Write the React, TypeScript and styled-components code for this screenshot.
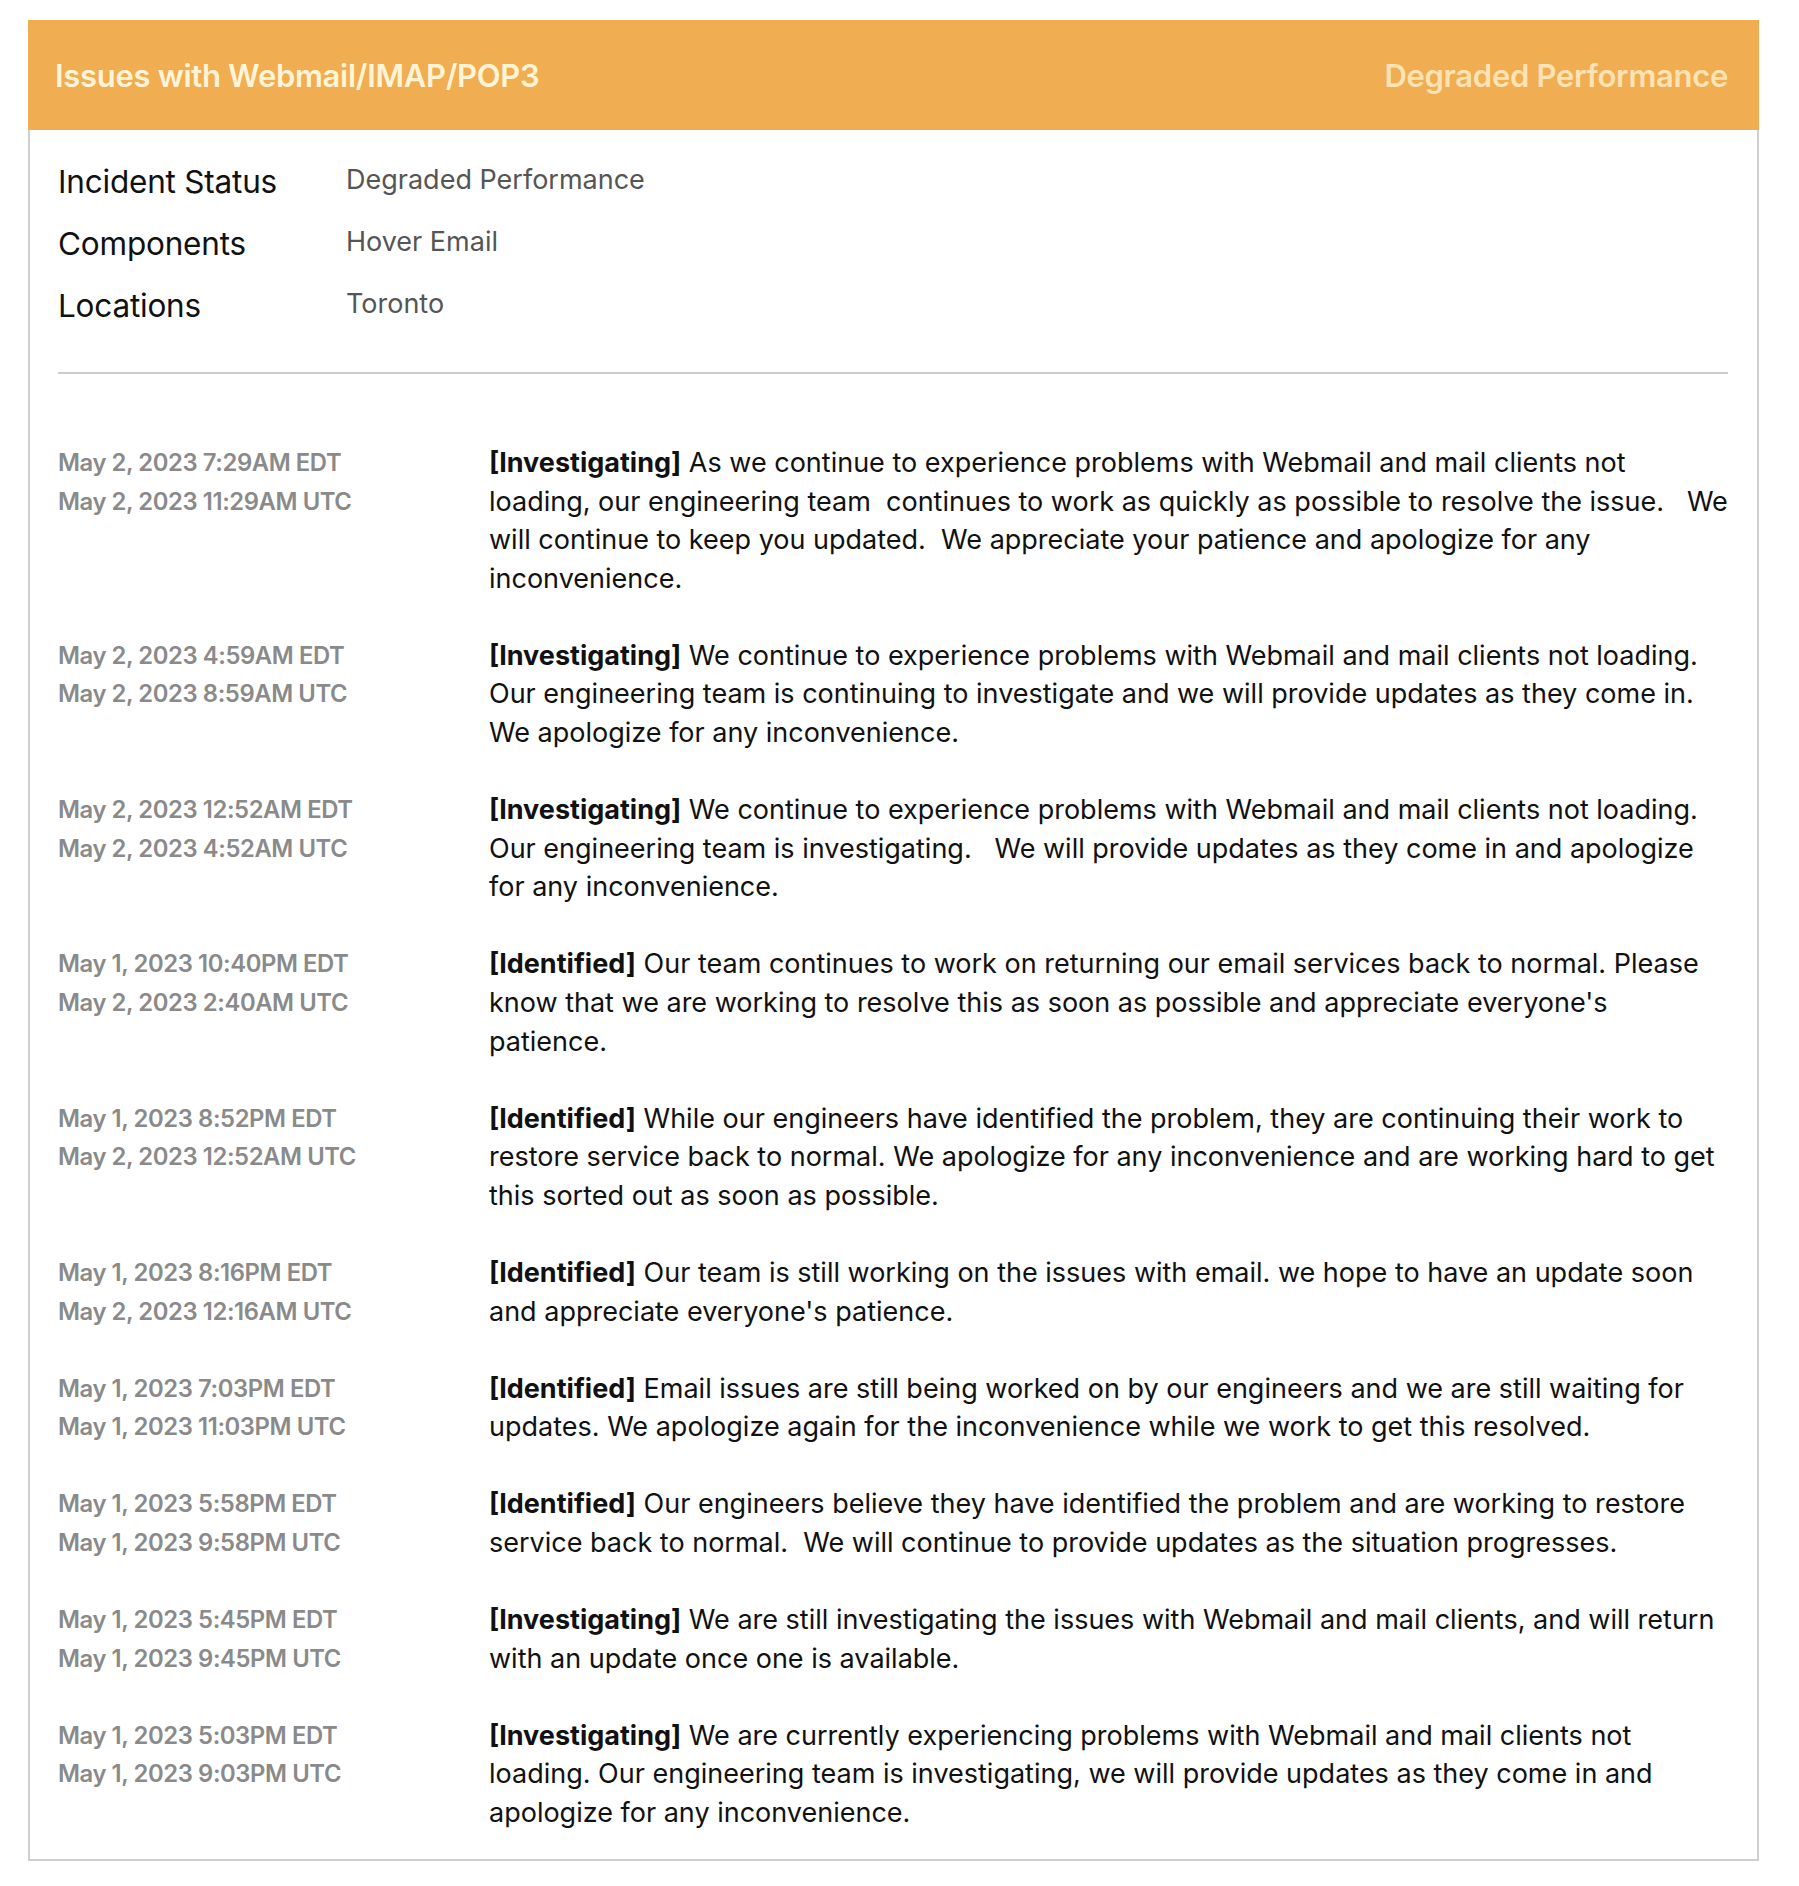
import React from "react";
import styled, { createGlobalStyle } from "styled-components";

const GlobalStyle = createGlobalStyle`
  html, body { margin: 0; padding: 0; background: #ffffff; }
  body { font-family: Inter, "Noto Sans", Arial, sans-serif; }
`;

const Page = styled.div`
  padding: 20px 40px 27px 28px;
`;

const Card = styled.section`
  border: 2px solid #cfcfcf;
  border-top: none;
  background: #fff;
`;

const Header = styled.header`
  display: flex;
  align-items: center;
  justify-content: space-between;
  height: 110px;
  margin: 0 -2px;
  padding: 0 31px 0 27px;
  background: #f0ad52;
  box-sizing: border-box;
`;

const Title = styled.h1`
  margin: 0;
  font-size: 31px;
  font-weight: 600;
  color: #fff4d6;
  letter-spacing: -0.3px;
`;

const Status = styled.span`
  font-size: 31px;
  font-weight: 600;
  color: #fde2b4;
  letter-spacing: -0.3px;
`;

const Body = styled.div`
  padding: 20px 29px 26px 28px;
`;

const Meta = styled.dl`
  display: grid;
  grid-template-columns: 288px 1fr;
  row-gap: 0;
  margin: 0;
  padding-bottom: 36px;
  border-bottom: 2px solid #cccccc;
`;

const Label = styled.dt`
  margin: 0;
  height: 62px;
  display: flex;
  align-items: center;
  font-size: 31.5px;
  color: #111;
  letter-spacing: -0.2px;
`;

const Value = styled.dd`
  margin: 0;
  height: 62px;
  display: flex;
  align-items: center;
  padding-bottom: 4px;
  box-sizing: border-box;
  font-size: 27px;
  color: #555;
`;

const Timeline = styled.div`
  display: flex;
  flex-direction: column;
  gap: 38.5px;
  padding-top: 70px;
`;

const Entry = styled.article`
  display: grid;
  grid-template-columns: 431px 1fr;
  line-height: 38.6px;
`;

const Dates = styled.div`
  display: flex;
  flex-direction: column;
  font-size: 23.8px;
  font-weight: 600;
  color: #8a8a8a;
  letter-spacing: -0.4px;
`;

const Message = styled.p`
  margin: 0;
  font-size: 27px;
  color: #111;
  white-space: pre-wrap;
`;

const Tag = styled.strong`
  font-weight: 700;
`;

type Update = { edt: string; utc: string; tag: string; text: string };

const updates: Update[] = [
  {
    edt: "May 2, 2023 7:29AM EDT",
    utc: "May 2, 2023 11:29AM UTC",
    tag: "Investigating",
    text: "As we continue to experience problems with Webmail and mail clients not loading, our engineering team  continues to work as quickly as possible to resolve the issue.   We will continue to keep you updated.  We appreciate your patience and apologize for any inconvenience.",
  },
  {
    edt: "May 2, 2023 4:59AM EDT",
    utc: "May 2, 2023 8:59AM UTC",
    tag: "Investigating",
    text: "We continue to experience problems with Webmail and mail clients not loading. Our engineering team is continuing to investigate and we will provide updates as they come in. We apologize for any inconvenience.",
  },
  {
    edt: "May 2, 2023 12:52AM EDT",
    utc: "May 2, 2023 4:52AM UTC",
    tag: "Investigating",
    text: "We continue to experience problems with Webmail and mail clients not loading. Our engineering team is investigating.   We will provide updates as they come in and apologize for any inconvenience.",
  },
  {
    edt: "May 1, 2023 10:40PM EDT",
    utc: "May 2, 2023 2:40AM UTC",
    tag: "Identified",
    text: "Our team continues to work on returning our email services back to normal. Please know that we are working to resolve this as soon as possible and appreciate everyone's patience.",
  },
  {
    edt: "May 1, 2023 8:52PM EDT",
    utc: "May 2, 2023 12:52AM UTC",
    tag: "Identified",
    text: "While our engineers have identified the problem, they are continuing their work to restore service back to normal. We apologize for any inconvenience and are working hard to get this sorted out as soon as possible.",
  },
  {
    edt: "May 1, 2023 8:16PM EDT",
    utc: "May 2, 2023 12:16AM UTC",
    tag: "Identified",
    text: "Our team is still working on the issues with email. we hope to have an update soon and appreciate everyone's patience.",
  },
  {
    edt: "May 1, 2023 7:03PM EDT",
    utc: "May 1, 2023 11:03PM UTC",
    tag: "Identified",
    text: "Email issues are still being worked on by our engineers and we are still waiting for updates. We apologize again for the inconvenience while we work to get this resolved.",
  },
  {
    edt: "May 1, 2023 5:58PM EDT",
    utc: "May 1, 2023 9:58PM UTC",
    tag: "Identified",
    text: "Our engineers believe they have identified the problem and are working to restore service back to normal.  We will continue to provide updates as the situation progresses.",
  },
  {
    edt: "May 1, 2023 5:45PM EDT",
    utc: "May 1, 2023 9:45PM UTC",
    tag: "Investigating",
    text: "We are still investigating the issues with Webmail and mail clients, and will return with an update once one is available.",
  },
  {
    edt: "May 1, 2023 5:03PM EDT",
    utc: "May 1, 2023 9:03PM UTC",
    tag: "Investigating",
    text: "We are currently experiencing problems with Webmail and mail clients not loading. Our engineering team is investigating, we will provide updates as they come in and apologize for any inconvenience.",
  },
];

const meta: [string, string][] = [
  ["Incident Status", "Degraded Performance"],
  ["Components", "Hover Email"],
  ["Locations", "Toronto"],
];

export default function App() {
  return (
    <>
      <GlobalStyle />
      <Page>
        <Card>
          <Header>
            <Title>Issues with Webmail/IMAP/POP3</Title>
            <Status>Degraded Performance</Status>
          </Header>
          <Body>
            <Meta>
              {meta.map(([k, v]) => (
                <React.Fragment key={k}>
                  <Label>{k}</Label>
                  <Value>{v}</Value>
                </React.Fragment>
              ))}
            </Meta>
            <Timeline>
              {updates.map((u) => (
                <Entry key={u.edt}>
                  <Dates>
                    <span>{u.edt}</span>
                    <span>{u.utc}</span>
                  </Dates>
                  <Message>
                    <Tag>[{u.tag}]</Tag> {u.text}
                  </Message>
                </Entry>
              ))}
            </Timeline>
          </Body>
        </Card>
      </Page>
    </>
  );
}
